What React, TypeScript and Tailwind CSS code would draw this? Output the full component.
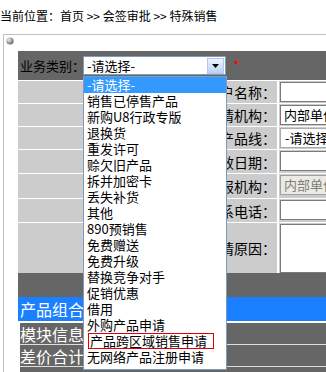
import React from "react";

const items = [
  "-请选择-",
  "销售已停售产品",
  "新购U8行政专版",
  "退换货",
  "重发许可",
  "赊欠旧产品",
  "拆并加密卡",
  "丢失补货",
  "其他",
  "890预销售",
  "免费赠送",
  "免费升级",
  "替换竞争对手",
  "促销优惠",
  "借用",
  "外购产品申请",
  "产品跨区域销售申请",
  "无网络产品注册申请",
];

type Row = { label: string; h: string; kind: "input" | "text" | "select" | "disabled" | "area" };

const rows: Row[] = [
  { label: "客户名称：", h: "h-[22px]", kind: "input" },
  { label: "申请机构：", h: "h-[22px]", kind: "text" },
  { label: "产品线：", h: "h-[22px]", kind: "select" },
  { label: "生效日期：", h: "h-[23px]", kind: "input" },
  { label: "上报机构：", h: "h-[24px]", kind: "disabled" },
  { label: "联系电话：", h: "h-[23px]", kind: "input" },
  { label: "申请原因：", h: "h-[50px]", kind: "area" },
];

function Field({ kind }: { kind: Row["kind"] }) {
  if (kind === "area") {
    return <div className="h-[49px] w-[90px] shrink-0 border border-[#7a7a7a] bg-white" />;
  }
  if (kind === "disabled") {
    return (
      <div className="h-[20px] w-[90px] shrink-0 border border-[#a0a0a0] bg-[#ebebe4] pl-[3px] text-[13px] leading-[18px] text-[#808080] whitespace-nowrap overflow-hidden">
        内部单位
      </div>
    );
  }
  if (kind === "text") {
    return (
      <div className="h-[20px] w-[90px] shrink-0 border border-[#7a7a7a] bg-white pl-[3px] text-[13px] leading-[18px] text-black whitespace-nowrap overflow-hidden">
        内部单位
      </div>
    );
  }
  if (kind === "select") {
    return (
      <div className="h-[20px] w-[90px] shrink-0 border border-[#a5acb5] bg-white pl-[4px] text-[13px] leading-[18px] text-black whitespace-nowrap overflow-hidden">
        -请选择
      </div>
    );
  }
  return <div className="h-[20px] w-[90px] shrink-0 border border-[#7a7a7a] bg-white" />;
}

export default function App() {
  return (
    <div
      className="relative w-[326px] h-[372px] overflow-hidden bg-white text-black"
      style={{ fontFamily: '"Noto Sans CJK SC", "Noto Sans", sans-serif' }}
    >
      <div className="h-[34px] flex items-center text-[12px] leading-none whitespace-nowrap pb-[2px] text-black">
        当前位置：首页 &gt;&gt; 会签审批 &gt;&gt; 特殊销售
      </div>
      <div className="ml-[3px] border-t border-l border-[#c0c0c0]">
        <div className="h-[16px] pl-[2px] pt-[2px]">
          <svg width="8" height="8" viewBox="0 0 8 8">
            <defs>
              <radialGradient id="g" cx="35%" cy="35%" r="65%">
                <stop offset="0%" stopColor="#f0f0f0" />
                <stop offset="100%" stopColor="#6a6a6a" />
              </radialGradient>
            </defs>
            <circle cx="4" cy="4" r="3.6" fill="url(#g)" />
          </svg>
        </div>
        <div className="ml-[14px] flex flex-col">
          <div className="h-[29px] bg-[#666666] flex items-center pl-[2px]">
            <span className="w-[63px] text-[13px] leading-none whitespace-nowrap">业务类别：</span>
            <div className="w-[143px] h-[19px] border border-[#7f9db9] bg-white flex items-center justify-between pl-[3px] pr-[1px]">
              <span className="text-[13px] leading-none">-请选择-</span>
              <div className="w-[17px] h-[16px] border border-[#b2c6ee] bg-gradient-to-b from-[#eef3fd] to-[#bcd0f6] flex items-center justify-center">
                <svg width="7" height="4" viewBox="0 0 7 4">
                  <path d="M0 0H7L3.5 4Z" fill="#000" />
                </svg>
              </div>
            </div>
            <span className="ml-[7px] text-[14px] text-[#ff0000] leading-none -mt-[2px]">*</span>
          </div>
          <div className="flex flex-col gap-[1px] pt-[1px] bg-white">
            {rows.map((r) => (
              <div key={r.label} className={`flex ${r.h} gap-[2px]`}>
                <div className="w-[207px] bg-[#cccccc] flex">
                  <div className="w-[100px]" />
                </div>
                <div className="w-[50px] bg-[#cccccc] flex items-center justify-end overflow-hidden whitespace-nowrap text-[14px] leading-none pr-[1px]">
                  {r.label}
                </div>
                <div className="flex-1 bg-[#cccccc] flex items-start pt-[1px] pl-[1px] overflow-hidden">
                  <Field kind={r.kind} />
                </div>
              </div>
            ))}
          </div>
          <div className="h-[24px] bg-[#666666]" />
          <div className="h-[24px] bg-[#1a80ff] flex items-center pl-[2px] text-white text-[16px] leading-none whitespace-nowrap">
            产品组合类型
          </div>
          <div className="mt-[2px] ml-[2px] flex flex-col gap-[1px] bg-[#dddddd]">
            <div className="h-[21px] bg-[#666666] flex items-center text-white text-[16px] leading-none whitespace-nowrap">
              模块信息
            </div>
            <div className="h-[21px] bg-[#666666] flex items-center text-white text-[16px] leading-none whitespace-nowrap">
              差价合计
            </div>
            <div className="h-[21px] bg-[#666666]" />
          </div>
        </div>
      </div>

      <div className="absolute left-[83px] top-[76px] w-[144px] h-[294px] border border-[#7f9db9] bg-white">
        {items.map((it, i) => (
          <div
            key={it}
            className={`h-[16px] pl-[3px] text-[13px] leading-[16px] whitespace-nowrap ${
              i === 0 ? "bg-[#3399ff] text-white" : "text-black"
            }`}
          >
            {i === 16 ? (
              <span className="inline-block ml-[1px] border border-[#e00000] pl-[1px] pr-[6px] leading-[14px]">{it}</span>
            ) : (
              it
            )}
          </div>
        ))}
      </div>
    </div>
  );
}
